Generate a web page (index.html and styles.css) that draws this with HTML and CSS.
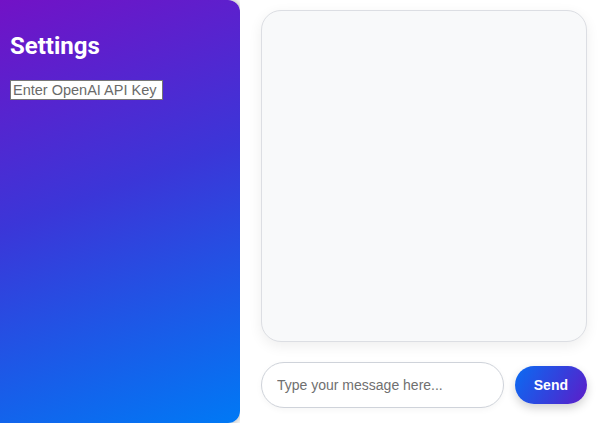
FILE: index.html
```html
<!DOCTYPE html>
<html lang="en">
<head>
<meta charset="utf-8">
<title>Chat</title>
<link rel="stylesheet" href="styles.css">
</head>
<body>
<div class="app">
  <aside class="sidebar">
    <h2 class="sidebar-title">Settings</h2>
    <input class="api-key" type="text" placeholder="Enter OpenAI API Key">
  </aside>
  <main class="main">
    <div class="chat-box"></div>
    <div class="composer">
      <input class="message" type="text" placeholder="Type your message here...">
      <button class="send">Send</button>
    </div>
  </main>
</div>
</body>
</html>
```
FILE: styles.css
```css
html, body {
  margin: 0;
  height: 100%;
  background: #ffffff;
}
body {
  font-family: "Liberation Sans", Arial, sans-serif;
}
.app {
  display: flex;
  height: 100%;
}
.sidebar {
  width: 240px;
  flex: none;
  box-sizing: border-box;
  padding: 10px;
  background: linear-gradient(160deg, #7212c6 0%, #3b36d8 45%, #0079f5 100%);
  border-radius: 0 12px 12px 0;
  box-shadow: 0 0 9px rgba(0, 0, 0, 0.4);
  color: #fff;
}
.sidebar-title {
  font-family: Roboto, "Liberation Sans", sans-serif;
  font-weight: 700;
  font-size: 24px;
  margin: 22px 0 20px;
  line-height: 28px;
}
.api-key {
  display: block;
  box-sizing: border-box;
  font-family: "Liberation Sans", Arial, sans-serif;
  font-size: 14.5px;
  width: 153px;
  height: 20px;
  padding: 0 2px;
  border: 1px solid #767676;
  background: #fff;
  margin: 0;
}
.api-key::placeholder { color: #6a6a6a; }
.main {
  flex: 1;
  position: relative;
  z-index: 1;
  background: #fff;
  display: flex;
  flex-direction: column;
  gap: 20px;
  padding: 10px 12px 15px 21px;
  min-width: 0;
}
.chat-box {
  flex: 1;
  background: #f8f9fa;
  border: 1px solid #dcdee3;
  border-radius: 20px;
  box-shadow: 0 4px 14px rgba(0, 0, 0, 0.07);
}
.composer {
  display: flex;
  align-items: center;
  gap: 11px;
}
.message {
  flex: 1;
  min-width: 0;
  font-family: "Liberation Sans", Arial, sans-serif;
  font-size: 14px;
  padding: 14px 15px;
  border: 1px solid #cfd3da;
  border-radius: 24px;
  outline: none;
  background: #fff;
  box-shadow: 0 2px 6px rgba(0, 0, 0, 0.04);
}
.message::placeholder { color: #707070; }
.send {
  font-family: "Liberation Sans", Arial, sans-serif;
  font-size: 14px;
  font-weight: 700;
  color: #fff;
  border: none;
  border-radius: 20px;
  padding: 11px 19px;
  background: linear-gradient(120deg, #0a6cf2 0%, #3440dc 55%, #5e1cc8 100%);
  box-shadow: 0 4px 10px rgba(0, 0, 0, 0.18);
  cursor: pointer;
}
```
